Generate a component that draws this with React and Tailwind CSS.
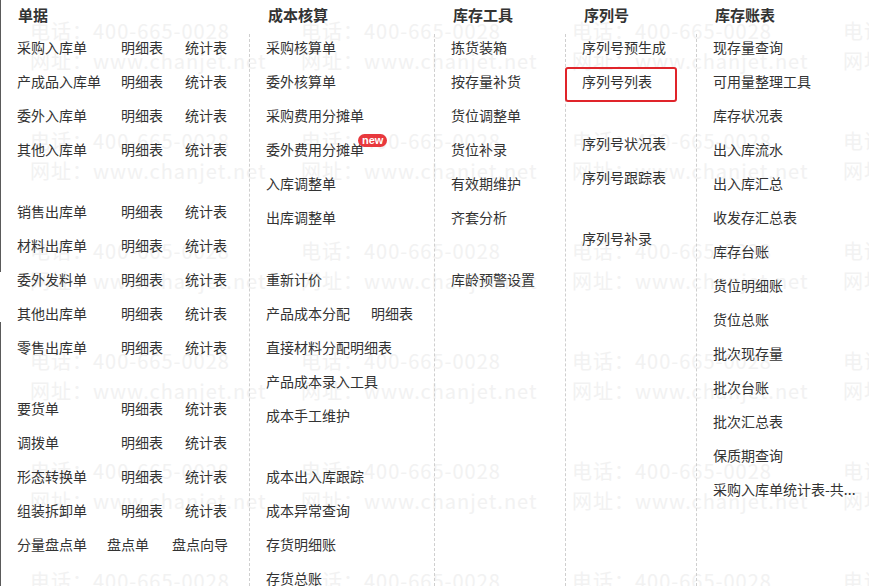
import React from "react";

const Row = ({ children, className = "" }) => (
  <div className={"h-[34px] shrink-0 flex items-center whitespace-nowrap " + className}>{children}</div>
);

const C1 = ({ name }) => (
  <Row>
    <span className="w-[104px]">{name}</span>
    <span className="w-[64px]">明细表</span>
    <span>统计表</span>
  </Row>
);

const Header = ({ children, pad }) => (
  <div className={"h-[30px] shrink-0 flex items-center text-[15px] font-bold text-[#333] " + pad}>{children}</div>
);

const Body = ({ children, border = true }) => (
  <div className={"flex-1 min-h-0 mt-1 flex flex-col pl-4 " + (border ? "border-l border-dashed border-[#cfcfcf]" : "")}>
    <div className="-mt-1 flex flex-col">{children}</div>
  </div>
);

const Watermark = () => {
  const rows = [0, 1, 2, 3, 4, 5];
  const cols = [0, 1, 2, 3];
  return (
    <div className="absolute inset-0 pl-[30px] pt-[16px] flex flex-col pointer-events-none overflow-hidden">
      {rows.map((r) => (
        <div key={r} className="h-[110px] shrink-0 flex">
          {cols.map((c) => (
            <div key={c} className="w-[271px] shrink-0 text-[20px] leading-[30px] text-[#f2f2f2] whitespace-nowrap tracking-[1px]">
              <div>电话：400-665-0028</div>
              <div>网址：www.chanjet.net</div>
            </div>
          ))}
        </div>
      ))}
    </div>
  );
};

export default function App() {
  return (
    <div className="relative w-[869px] h-[586px] bg-white overflow-hidden font-['Noto_Sans_CJK_SC','Microsoft_YaHei',sans-serif] text-[14px] text-[#333]">
      <Watermark />
      <div className="relative flex h-full">
        {/* left edge strip */}
        <div className="w-px flex flex-col">
          <div className="h-[272px] bg-[#5a5a5a]" />
          <div className="h-[50px]" />
          <div className="flex-1 bg-[#5a5a5a]" />
        </div>

        {/* 单据 */}
        <div className="w-[248px] flex flex-col overflow-hidden">
          <Header pad="pl-[17px]">单据</Header>
          <Body border={false}>
            <C1 name="采购入库单" />
            <C1 name="产成品入库单" />
            <C1 name="委外入库单" />
            <C1 name="其他入库单" />
            <div className="h-[28px] shrink-0" />
            <C1 name="销售出库单" />
            <C1 name="材料出库单" />
            <C1 name="委外发料单" />
            <C1 name="其他出库单" />
            <C1 name="零售出库单" />
            <div className="h-[27px] shrink-0" />
            <C1 name="要货单" />
            <C1 name="调拨单" />
            <C1 name="形态转换单" />
            <C1 name="组装拆卸单" />
            <Row>
              <span className="w-[90px]">分量盘点单</span>
              <span className="w-[65px]">盘点单</span>
              <span>盘点向导</span>
            </Row>
          </Body>
        </div>

        {/* 成本核算 */}
        <div className="w-[185px] flex flex-col overflow-hidden">
          <Header pad="pl-[19px]">成本核算</Header>
          <Body>
            <Row>采购核算单</Row>
            <Row>委外核算单</Row>
            <Row>采购费用分摊单</Row>
            <Row className="relative">
              委外费用分摊单
              <span className="absolute left-[92px] top-[2px] h-[13px] px-[4px] rounded-full bg-[#e8383d] text-white text-[11px] leading-[13px] font-bold font-['Liberation_Sans',sans-serif]">
                new
              </span>
            </Row>
            <Row>入库调整单</Row>
            <Row>出库调整单</Row>
            <div className="h-[28px] shrink-0" />
            <Row>重新计价</Row>
            <Row>
              <span className="w-[105px]">产品成本分配</span>
              <span>明细表</span>
            </Row>
            <Row>直接材料分配明细表</Row>
            <Row>产品成本录入工具</Row>
            <Row>成本手工维护</Row>
            <div className="h-[27px] shrink-0" />
            <Row>成本出入库跟踪</Row>
            <Row>成本异常查询</Row>
            <Row>存货明细账</Row>
            <Row>存货总账</Row>
          </Body>
        </div>

        {/* 库存工具 */}
        <div className="w-[131px] flex flex-col overflow-hidden">
          <Header pad="pl-[19px]">库存工具</Header>
          <Body>
            <Row>拣货装箱</Row>
            <Row>按存量补货</Row>
            <Row>货位调整单</Row>
            <Row>货位补录</Row>
            <Row>有效期维护</Row>
            <Row>齐套分析</Row>
            <div className="h-[28px] shrink-0" />
            <Row>库龄预警设置</Row>
          </Body>
        </div>

        {/* 序列号 */}
        <div className="w-[131px] flex flex-col">
          <Header pad="pl-[19px]">序列号</Header>
          <Body>
            <Row>序列号预生成</Row>
            <Row className="relative">
              序列号列表
              <div className="absolute left-[-17px] top-[3px] w-[112px] h-[35px] border-2 border-[#e0242a] rounded-[3px]" />
            </Row>
            <div className="h-[28px] shrink-0" />
            <Row>序列号状况表</Row>
            <Row>序列号跟踪表</Row>
            <div className="h-[27px] shrink-0" />
            <Row>序列号补录</Row>
          </Body>
        </div>

        {/* 库存账表 */}
        <div className="flex-1 flex flex-col overflow-hidden">
          <Header pad="pl-[19px]">库存账表</Header>
          <Body>
            <Row>现存量查询</Row>
            <Row>可用量整理工具</Row>
            <Row>库存状况表</Row>
            <Row>出入库流水</Row>
            <Row>出入库汇总</Row>
            <Row>收发存汇总表</Row>
            <Row>库存台账</Row>
            <Row>货位明细账</Row>
            <Row>货位总账</Row>
            <Row>批次现存量</Row>
            <Row>批次台账</Row>
            <Row>批次汇总表</Row>
            <Row>保质期查询</Row>
            <Row>采购入库单统计表-共...</Row>
          </Body>
        </div>
      </div>
    </div>
  );
}
